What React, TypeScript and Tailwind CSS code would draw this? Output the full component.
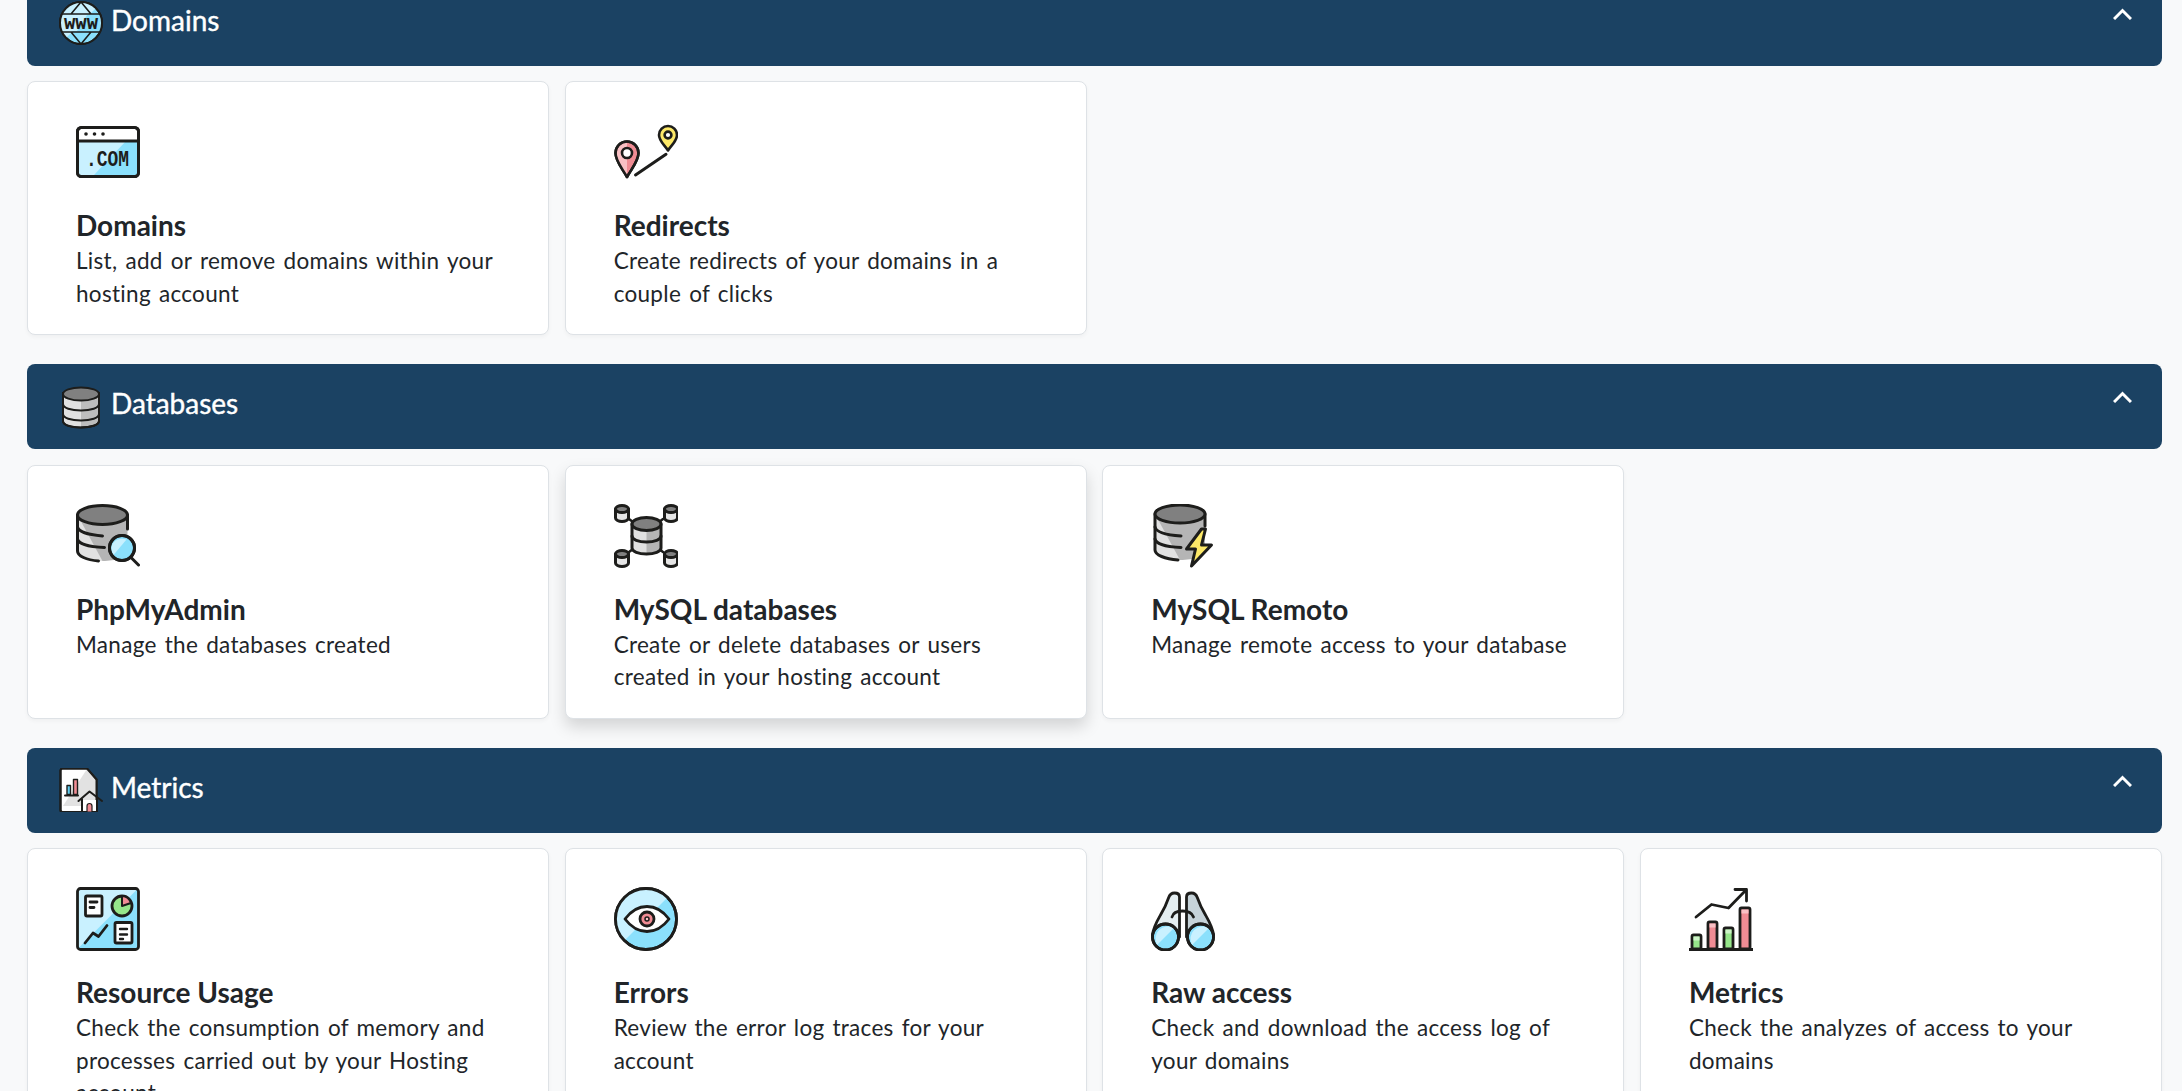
const ink = "#1d1d1b";

function IconDomains() {
	return (
		<svg viewBox="0 0 64 64" className="w-16 h-16" fill="none" stroke={ink} strokeWidth="3" strokeLinejoin="round">
			<rect x="1.500" y="7.500" width="61" height="49" rx="4" fill="#fff" />
			<path d="M2 21h60v31a3 3 0 0 1-3 3H5a3 3 0 0 1-3-3z" fill="#8be0fc" stroke="none" />
			<path d="M2 21h48L18 55H5a3 3 0 0 1-3-3z" fill="#c9f1ff" stroke="none" />
			<rect x="1.500" y="7.500" width="61" height="49" rx="4" />
			<path d="M2 21h60" />
			<circle cx="10" cy="14" r="1.800" fill={ink} stroke="none" />
			<circle cx="18.500" cy="14" r="1.800" fill={ink} stroke="none" />
			<circle cx="27" cy="14" r="1.800" fill={ink} stroke="none" />
			<text x="10" y="46" fill={ink} stroke="none" fontFamily="'Liberation Mono', monospace" fontWeight="700" fontSize="22" textLength="43" lengthAdjust="spacingAndGlyphs">.COM</text>
		</svg>
	);
}

function IconRedirects() {
	return (
		<svg viewBox="0 0 64 64" className="w-16 h-16" fill="none" stroke={ink} strokeWidth="2.600" strokeLinejoin="round" strokeLinecap="round">
			<path d="M13 57C8 48 1.500 41 1.500 33a11.500 11.500 0 0 1 23 0C24.500 41 18 48 13 57z" fill="#f08c94" />
			<path d="M13 56C8 48 2.800 41 2.800 33A10.200 10.200 0 0 1 13 22.800z" fill="#f9c0c4" stroke="none" />
			<path d="M13 57C8 48 1.500 41 1.500 33a11.500 11.500 0 0 1 23 0C24.500 41 18 48 13 57z" />
			<circle cx="13" cy="33" r="5" fill="#fff" />
			<path d="M54 30.500C50.500 25 45 21 45 15a9 9 0 0 1 18 0c0 6-5.500 10-9 15.500z" fill="#fde968" />
			<circle cx="54" cy="15" r="3.400" fill="#fff" />
			<path d="M21.500 55 52 34.300" strokeWidth="3" />
		</svg>
	);
}

function IconDbSearch() {
	return (
		<svg viewBox="0 0 64 64" className="w-16 h-16" fill="none" stroke={ink} strokeWidth="3" strokeLinecap="round" strokeLinejoin="round">
			<path d="M1.500 11v36c0 6 12 10 25 10s25-4 25-10V11z" fill="#b5b5b5" stroke="none" />
			<path d="M1.500 11v36c0 6 12 10 25 10z" fill="#e1e1e1" stroke="none" />
			<path d="M1.500 11v36c0 5 9 9 21 10M51.500 11v14" />
			<path d="M1.500 23c1 5 12 8 25 9M1.500 35c1 5 12 8 27 8.500" />
			<ellipse cx="26.500" cy="11" rx="25" ry="9.500" fill="#808080" />
			<circle cx="46" cy="44" r="12.500" fill="#8be0fc" />
			<path d="M37.500 51c-3-5-2.500-10 .5-13 3.500-3.500 8-4 12.500-2.500z" fill="#c9f1ff" stroke="none" />
			<circle cx="46" cy="44" r="12.500" />
			<path d="M55 53.500 62.500 61" />
		</svg>
	);
}

function MiniDb({ x, y }: { x: number; y: number }) {
	return (
		<g transform={`translate(${x} ${y})`}>
			<path d="M1.500 5v9c0 2 3 3.500 6.500 3.500s6.500-1.500 6.500-3.500V5z" fill="#e6e6e6" />
			<ellipse cx="8" cy="5" rx="6.500" ry="3.500" fill="#808080" />
		</g>
	);
}

function IconDbNetwork() {
	return (
		<svg viewBox="0 0 64 64" className="w-16 h-16" fill="none" stroke={ink} strokeWidth="3" strokeLinecap="round" strokeLinejoin="round">
			<path d="M15 15l4 3M49 15l-4 3M15 48l4-3M49 48l-4-3" strokeWidth="2.500" />
			<MiniDb x={0} y={0} />
			<MiniDb x={49} y={0} />
			<MiniDb x={0} y={45} />
			<MiniDb x={49} y={45} />
			<path d="M18 20v24c0 3.500 6.500 6 14.500 6s14.500-2.500 14.500-6V20z" fill="#b5b5b5" stroke="none" />
			<path d="M18 20v24c0 3.500 6.500 6 14.500 6V20z" fill="#e1e1e1" stroke="none" />
			<path d="M18 20v24c0 3.500 6.500 6 14.500 6s14.500-2.500 14.500-6V20" />
			<path d="M18 32c0 3.500 6.500 6 14.500 6s14.500-2.500 14.500-6" />
			<ellipse cx="32.500" cy="20" rx="14.500" ry="6.500" fill="#808080" />
		</svg>
	);
}

function IconDbBolt() {
	return (
		<svg viewBox="0 0 64 64" className="w-16 h-16" fill="none" stroke={ink} strokeWidth="3" strokeLinecap="round" strokeLinejoin="round">
			<path d="M4 10v36c0 6 11 10 25 10s25-4 25-10V10z" fill="#b5b5b5" stroke="none" />
			<path d="M4 10v36c0 6 11 10 25 10z" fill="#e1e1e1" stroke="none" />
			<path d="M4 10v36c0 5 10 9 23 10M54 10v12" />
			<path d="M4 23c1 5 12 8 26 9M4 35c1 5 12 8 26 8.500" />
			<ellipse cx="29" cy="10" rx="25" ry="9" fill="#808080" />
			<path d="M50.500 25 35.500 45h9L40.500 62 60.500 41h-10l4-16z" fill="#fde968" />
		</svg>
	);
}

function IconResource() {
	return (
		<svg viewBox="0 0 64 64" className="w-16 h-16" fill="none" stroke={ink} strokeWidth="2.800" strokeLinecap="round" strokeLinejoin="round">
			<rect x="1.500" y="1.500" width="61" height="61" rx="3" fill="#8be0fc" stroke="none" />
			<path d="M1.500 62V4.500a3 3 0 0 1 3-3H62z" fill="#c9f1ff" stroke="none" />
			<rect x="1.500" y="1.500" width="61" height="61" rx="3" />
			<rect x="9.500" y="9" width="16.500" height="20" rx="1.500" fill="#fff" />
			<path d="M14 15h7M14 20.500h4" />
			<circle cx="46" cy="19" r="10" fill="#96e68a" />
			<path d="M46 9a10 10 0 0 1 9 7l-9 3z" fill="#f08c94" strokeWidth="2" />
			<rect x="39" y="35.500" width="17" height="20.500" rx="1.500" fill="#fff" />
			<path d="M44 42h7M44 47.500h7M44 52h3" strokeWidth="2.400" />
			<path d="M9 56l8-10 5.500 3.500 8.500-11" />
		</svg>
	);
}

function IconEye() {
	return (
		<svg viewBox="0 0 64 64" className="w-16 h-16" fill="none" stroke={ink} strokeWidth="2.800" strokeLinejoin="round">
			<circle cx="32" cy="32" r="30.500" fill="#8be0fc" />
			<path d="M10.500 53.500A30.400 30.400 0 0 1 53.500 10.500z" fill="#c9f1ff" stroke="none" />
			<circle cx="32" cy="32" r="30.500" />
			<path d="M11 32c6-8 13-12.500 22-12.500S49 24 55 32c-6 8-13 12.500-22 12.500S17 40 11 32z" fill="#fff" />
			<circle cx="33" cy="32" r="7" fill="#f08c94" />
			<circle cx="33" cy="32" r="2" fill="#f9c0c4" strokeWidth="1.500" />
		</svg>
	);
}

function IconBinoculars() {
	return (
		<svg viewBox="0 0 64 64" className="w-16 h-16" fill="none" stroke={ink} strokeWidth="2.800" strokeLinecap="round" strokeLinejoin="round">
			<path d="M1.500 48c.5-7 4-13 8-20 3-5 6-11 8-17 1-3 3-5 6-5s5 1 5 4v40z" fill="#e4eef1" />
			<path d="M62.500 48c-.5-7-4-13-8-20-3-5-6-11-8-17-1-3-3-5-6-5s-5 1-5 4v40z" fill="#c6d3d9" />
			<path d="M21 30c1-4 5-6 10.500-6S41 26 42.500 30" fill="none" />
			<circle cx="14.500" cy="50" r="13" fill="#8be0fc" />
			<path d="M6 58A12.500 12.500 0 0 1 23 41z" fill="#c9f1ff" stroke="none" />
			<circle cx="14.500" cy="50" r="13" />
			<circle cx="49.500" cy="50" r="13" fill="#8be0fc" />
			<path d="M41 58A12.500 12.500 0 0 1 58 41z" fill="#c9f1ff" stroke="none" />
			<circle cx="49.500" cy="50" r="13" />
		</svg>
	);
}

function Bar({ x, y, w, fill, top }: { x: number; y: number; w: number; fill: string; top: string }) {
	return (
		<>
			<rect x={x} y={y} width={w} height={62 - y} rx="1.500" fill={fill} />
			<rect x={x + 1.500} y={y + 1.500} width={w - 3} height="4" fill={top} stroke="none" />
		</>
	);
}

function IconMetrics() {
	return (
		<svg viewBox="0 0 64 64" className="w-16 h-16" fill="none" stroke={ink} strokeWidth="2.800" strokeLinecap="round" strokeLinejoin="round">
			<Bar x={3} y={48} w={9} fill="#96e68a" top="#cdf4c7" />
			<Bar x={19} y={35} w={9} fill="#f08c94" top="#f9c0c4" />
			<Bar x={35} y={41} w={9} fill="#96e68a" top="#cdf4c7" />
			<Bar x={51} y={21} w={10} fill="#f08c94" top="#f9c0c4" />
			<path d="M0 62.500h64" />
			<path d="M7 30 22.500 17.500 39.500 21 57 3M46 2.500h11.500V14" />
		</svg>
	);
}

function HeaderWww() {
	return (
		<svg viewBox="0 0 44 44" className="w-11 h-11 shrink-0" fill="none" stroke={ink} strokeWidth="2" strokeLinejoin="round">
			<circle cx="22" cy="22" r="21" fill="#8be0fc" />
			<path d="M7 37A21 21 0 0 1 37 7z" fill="#c9f1ff" stroke="none" />
			<path d="M3 13h38M3 31h38M22 1 12 13M22 1l10 12M22 43 12 31M22 43l10-12" strokeWidth="1.600" />
			<rect x="2" y="14" width="40" height="16" fill="#c9f1ff" stroke="none" />
			<path d="M28 14h13.500v16H18z" fill="#8be0fc" stroke="none" />
			<circle cx="22" cy="22" r="21" />
			<text x="5" y="28" fill={ink} stroke="none" fontFamily="'Liberation Mono', monospace" fontWeight="700" fontSize="16" textLength="34" lengthAdjust="spacingAndGlyphs">WWW</text>
		</svg>
	);
}

function HeaderDb() {
	return (
		<svg viewBox="0 0 44 44" className="w-11 h-11 shrink-0" fill="none" stroke={ink} strokeWidth="2" strokeLinecap="round" strokeLinejoin="round">
			<path d="M4 8v28c0 4 8 6.500 18 6.500S40 40 40 36V8z" fill="#bdbdbd" />
			<path d="M5 9v27c0 3.500 7 5.500 17 5.500V9z" fill="#e1e1e1" stroke="none" />
			<path d="M4 8v28c0 4 8 6.500 18 6.500S40 40 40 36V8" />
			<path d="M4 19c0 4 8 6.500 18 6.500S40 23 40 19M4 29c0 4 8 6.500 18 6.500S40 33 40 29" />
			<ellipse cx="22" cy="9" rx="18" ry="6.500" fill="#808080" />
		</svg>
	);
}

function HeaderMetrics() {
	return (
		<svg viewBox="0 0 44 44" className="w-11 h-11 shrink-0" fill="none" stroke={ink} strokeWidth="2" strokeLinecap="round" strokeLinejoin="round">
			<path d="M1.500 2.500a2 2 0 0 1 2-2H28l9.500 11V42a2 2 0 0 1-2 2h-32a2 2 0 0 1-2-2z" fill="#fff" />
			<path d="M28 1l9 11v26H4z" fill="#e2e2e2" stroke="none" />
			<path d="M1.500 2.500a2 2 0 0 1 2-2H28l9.500 11V42a2 2 0 0 1-2 2h-32a2 2 0 0 1-2-2z" />
			<rect x="8" y="17.500" width="3.500" height="9" fill="#5fcdf0" strokeWidth="1.400" />
			<rect x="14.500" y="11.500" width="4" height="15" fill="#f08c94" strokeWidth="1.400" />
			<path d="M6 27.500h13" />
			<path d="M23 32v12h15V32z" fill="#fff" stroke="none" />
			<path d="M19.500 33 30.500 23.500 43 33M23 31v13h15V31" />
			<path d="M28 44v-6a2.500 2.500 0 0 1 5 0v6z" fill="#f08c94" strokeWidth="1.200" />
		</svg>
	);
}

const sections = [
	{
		title: "Domains",
		icon: <HeaderWww />,
		cards: [
			{ title: "Domains", text: "List, add or remove domains within your hosting account", icon: <IconDomains /> },
			{ title: "Redirects", text: "Create redirects of your domains in a couple of clicks", icon: <IconRedirects /> },
		],
	},
	{
		title: "Databases",
		icon: <HeaderDb />,
		cards: [
			{ title: "PhpMyAdmin", text: "Manage the databases created", icon: <IconDbSearch /> },
			{ title: "MySQL databases", text: "Create or delete databases or users created in your hosting account", icon: <IconDbNetwork />, raised: true },
			{ title: "MySQL Remoto", text: "Manage remote access to your database", icon: <IconDbBolt /> },
		],
	},
	{
		title: "Metrics",
		icon: <HeaderMetrics />,
		cards: [
			{ title: "Resource Usage", text: "Check the consumption of memory and processes carried out by your Hosting account", icon: <IconResource /> },
			{ title: "Errors", text: "Review the error log traces for your account", icon: <IconEye /> },
			{ title: "Raw access", text: "Check and download the access log of your domains", icon: <IconBinoculars /> },
			{ title: "Metrics", text: "Check the analyzes of access to your domains", icon: <IconMetrics /> },
		],
	},
];

export default function App() {
	return (
		<div className="h-screen overflow-hidden bg-[#f8f9fa] font-['Lato',sans-serif] text-[#212529]">
			<div className="-mt-[19.3px] flex flex-col gap-[29px] pl-[27px] pr-[20px]">
				{sections.map((section) => (
					<section key={section.title} className="flex flex-col gap-[15.5px]">
						<div className="h-[85px] rounded-lg bg-[#1b4263] pl-[32px] pr-[30px] flex items-center justify-between text-white">
							<div className="flex items-center gap-2">
								{section.icon}
								<h2 className="text-[28px] leading-none -mt-[7px] [-webkit-text-stroke:0.4px_#fff]">{section.title}</h2>
							</div>
							<svg viewBox="0 0 19 12" className="w-[19px] h-3 -mt-[19px]" fill="none" stroke="#fff" strokeWidth="3">
								<path d="M1 11 9.500 2.500 18 11" />
							</svg>
						</div>
						<div className="grid grid-cols-4 gap-[15.5px]">
							{section.cards.map((card) => (
								<div
									key={card.title}
									className={
										card.raised
											? "h-[254px] rounded-lg border border-[#dee2e6] bg-white px-[48px] pt-[38px] shadow-[0_8px_16px_rgba(0,0,0,0.15)]"
											: "h-[254px] rounded-lg border border-[#dee2e6] bg-white px-[48px] pt-[38px] shadow-[0_2px_4px_rgba(0,0,0,0.04)]"
									}
								>
									{card.icon}
									<h3 className="mt-[22px] text-[28px] leading-[39px] font-bold">{card.title}</h3>
									<p className="text-[22.5px] leading-[32.5px] tracking-[0.3px] [word-spacing:2px]">{card.text}</p>
								</div>
							))}
						</div>
					</section>
				))}
			</div>
		</div>
	);
}
